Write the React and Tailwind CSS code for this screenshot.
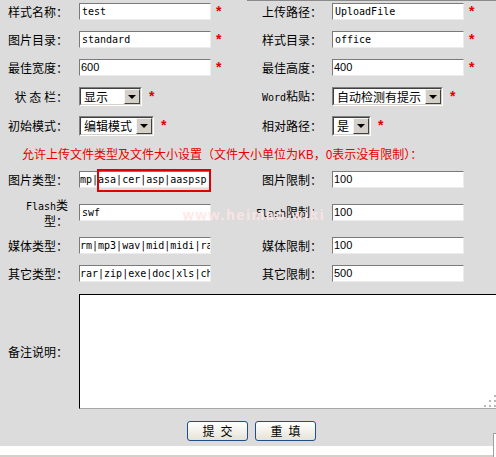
const cjk = "font-['Noto_Sans_CJK_SC',sans-serif]";
const mono = "font-['DejaVu_Sans_Mono',monospace]";
const sans = "font-['Liberation_Sans',sans-serif]";

function Star({ ml = "ml-[5px]" }) {
  return (
    <span className={`${ml} ${sans} text-[14px] font-bold leading-none text-[#e00000] -mt-[2px]`}>*</span>
  );
}

function Field({ value, kind = "mono", pl = "pl-[2px]", children }) {
  const font = kind === "mono" ? `${mono} text-[10px]` : `${sans} text-[11px]`;
  return (
    <div className="relative h-[17px] w-[132px] shrink-0 bg-white border-t border-l border-[#7a7a7a] border-b border-r border-b-[#ececec] border-r-[#ececec]">
      <div className={`h-full overflow-hidden whitespace-nowrap leading-[15px] text-black ${font} ${pl}`}>{value}</div>
      {children}
    </div>
  );
}

function Select({ w, h, text }) {
  return (
    <div className={`flex shrink-0 ${w} ${h} border-t border-l border-[#808080] border-b border-r border-b-white border-r-white`}>
      <div className="flex flex-1 items-center bg-white border-t border-l border-[#404040] border-b border-r border-b-[#d4d0c8] border-r-[#d4d0c8]">
        <span className={`flex-1 pl-[3px] ${cjk} text-[12px] leading-[14px] text-black whitespace-nowrap`}>{text}</span>
        <div className="flex h-full w-[16px] items-center justify-center bg-[#d4d0c8] border-t border-l border-[#f4f4f4] border-b border-r border-b-[#404040] border-r-[#404040]">
          <div className="h-0 w-0 border-l-[4px] border-r-[4px] border-t-[4px] border-l-transparent border-r-transparent border-t-black" />
        </div>
      </div>
    </div>
  );
}

function Label({ w, children }) {
  return (
    <div className={`${w} shrink-0 text-right ${cjk} text-[12px] leading-[14px] text-black whitespace-nowrap`}>{children}</div>
  );
}

function Row({ mt, h = "h-[17px]", left, right }) {
  return (
    <div className={`flex items-center ${h} ${mt}`}>
      <div className="flex w-[250px] shrink-0 items-center">
        <Label w="w-[68px]">{left.label}</Label>
        <div className="ml-[11px] flex items-center">{left.control}</div>
      </div>
      <div className="flex items-center">
        <Label w="w-[72px]">{right.label}</Label>
        <div className="ml-[10px] flex items-center">{right.control}</div>
      </div>
    </div>
  );
}

function Btn({ a, b }) {
  return (
    <div className={`flex h-[20px] w-[61px] items-center justify-center gap-[6px] rounded-[3px] border border-[#1f4f86] bg-gradient-to-b from-white to-[#e6e3d6] ${cjk} text-[12px] leading-none text-black`}>
      <span>{a}</span>
      <span>{b}</span>
    </div>
  );
}

export default function App() {
  return (
    <div className="relative h-[457px] w-[496px] overflow-hidden bg-white">
      <div className="bg-[#dcdcdc] pb-[5px]">
        <div className="ml-[247px] h-[1px] bg-[#8a8a8a]" />

        <Row
          mt="mt-[2px]"
          left={{ label: "样式名称：", control: <><Field value="test" /><Star /></> }}
          right={{ label: "上传路径：", control: <><Field value="UploadFile" /><Star /></> }}
        />
        <Row
          mt="mt-[11px]"
          left={{ label: "图片目录：", control: <><Field value="standard" /><Star /></> }}
          right={{ label: "样式目录：", control: <><Field value="office" /><Star /></> }}
        />
        <Row
          mt="mt-[11px]"
          left={{ label: "最佳宽度：", control: <><Field value="600" kind="sans" pl="pl-[1px]" /><Star /></> }}
          right={{ label: "最佳高度：", control: <><Field value="400" kind="sans" pl="pl-[1px]" /><Star /></> }}
        />
        <Row
          mt="mt-[11px]"
          h="h-[19px]"
          left={{ label: "状 态 栏：", control: <><Select w="w-[63px]" h="h-[19px]" text="显示" /><Star ml="ml-[7px]" /></> }}
          right={{
            label: <><span className={`${mono} text-[10px]`}>Word</span>粘贴：</>,
            control: <><Select w="w-[111px]" h="h-[19px]" text="自动检测有提示" /><Star ml="ml-[7px]" /></>,
          }}
        />
        <Row
          mt="mt-[10px]"
          h="h-[20px]"
          left={{ label: "初始模式：", control: <><Select w="w-[75px]" h="h-[20px]" text="编辑模式" /><Star ml="ml-[7px]" /></> }}
          right={{ label: "相对路径：", control: <><Select w="w-[39px]" h="h-[20px]" text="是" /><Star ml="ml-[7px]" /></> }}
        />

        <div className={`mt-[12px] ml-[22px] h-[12px] ${cjk} text-[12px] leading-[12px] text-[#e60000] whitespace-nowrap`}>
          允许上传文件类型及文件大小设置（文件大小单位为KB，0表示没有限制）：
        </div>

        <Row
          mt="mt-[11px]"
          left={{
            label: "图片类型：",
            control: (
              <Field value="mp|asa|cer|asp|aaspsp" pl="pl-0">
                <div className="absolute left-[17px] top-[-3px] h-[23px] w-[114px] border-2 border-[#e00000]" />
              </Field>
            ),
          }}
          right={{ label: "图片限制：", control: <Field value="100" kind="sans" pl="pl-[1px]" /> }}
        />
        <Row
          mt="mt-[16px]"
          left={{
            label: <><span className={`${mono} text-[10px]`}>Flash</span>类<br />型：</>,
            control: <Field value="swf" />,
          }}
          right={{
            label: <><span className={`${mono} text-[10px]`}>Flash</span>限制：</>,
            control: <Field value="100" kind="sans" pl="pl-[1px]" />,
          }}
        />
        <Row
          mt="mt-[16px]"
          left={{ label: "媒体类型：", control: <Field value="rm|mp3|wav|mid|midi|ra|avi" pl="pl-0" /> }}
          right={{ label: "媒体限制：", control: <Field value="100" kind="sans" pl="pl-[1px]" /> }}
        />
        <Row
          mt="mt-[11px]"
          left={{ label: "其它类型：", control: <Field value="rar|zip|exe|doc|xls|chm|hlp" pl="pl-0" /> }}
          right={{ label: "其它限制：", control: <Field value="500" kind="sans" pl="pl-[1px]" /> }}
        />

        <div className="mt-[12px] flex h-[115px] items-center">
          <Label w="w-[68px]">备注说明：</Label>
          <div className="relative ml-[11px] h-full flex-1 bg-white border-t border-l border-black border-b border-b-[#a8a8a8]">
            <svg className="absolute bottom-[1px] right-[0px]" width="12" height="12" viewBox="0 0 12 12">
              <rect x="10" y="0" width="2" height="2" fill="#b8b8b8" />
              <rect x="5" y="5" width="2" height="2" fill="#b8b8b8" />
              <rect x="10" y="5" width="2" height="2" fill="#b8b8b8" />
              <rect x="0" y="10" width="2" height="2" fill="#b8b8b8" />
              <rect x="5" y="10" width="2" height="2" fill="#b8b8b8" />
              <rect x="10" y="10" width="2" height="2" fill="#b8b8b8" />
            </svg>
          </div>
        </div>

        <div className="mt-[12px] flex gap-[7px] pl-[187px]">
          <Btn a="提" b="交" />
          <Btn a="重" b="填" />
        </div>
      </div>
      <div className="h-[9px] bg-white" />
      <div className="h-[2px] bg-[#d4d0c8]" />

      <div className={`pointer-events-none absolute left-[183px] top-[208px] ${sans} text-[14px] font-bold leading-none tracking-[1.8px] text-[#ffe6e6]/90 whitespace-nowrap`}>
        www.heimao.wiki
      </div>
      <div className="absolute bottom-0 right-0 h-[24px] w-[3px] border-l border-t border-[#a0a0a0] bg-white" />
    </div>
  );
}
